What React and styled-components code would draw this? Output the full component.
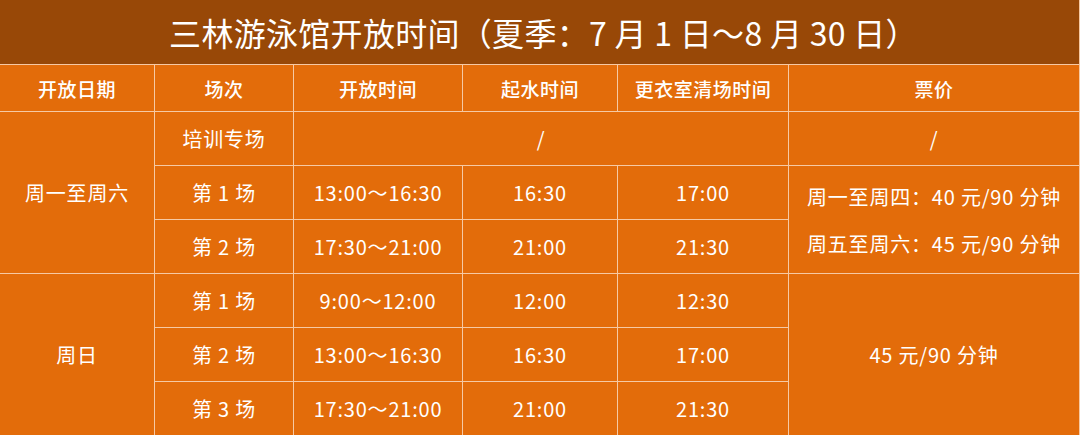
import React from "react";
import styled, { createGlobalStyle } from "styled-components";

const GlobalStyle = createGlobalStyle`
  html, body {
    margin: 0;
    padding: 0;
    background: #e36c0a;
    overflow: hidden;
  }
`;

// 표 전체: 배경색이 곧 선 색 (gap 1px)
const Table = styled.div`
  display: grid;
  grid-template-columns: 154px 138px 168px 154px 170px 290px;
  grid-template-rows: 64px 46px repeat(6, 53px);
  gap: 1px;
  width: 1080px;
  height: 435px;
  padding-right: 1px;
  box-sizing: border-box;
  background: #f6c9a4;
  overflow: hidden;
  font-family: "Noto Sans CJK SC", "Noto Sans", sans-serif;
  color: #fff;
`;

const Title = styled.div`
  grid-column: 1 / -1;
  background: #984807;
  display: flex;
  align-items: center;
  justify-content: center;
  font-size: 32px;
  font-weight: 400;
  padding-left: 8px;
  letter-spacing: 0.3px;
`;

const Cell = styled.div`
  grid-column: ${(p) => p.$col || "auto"};
  grid-row: ${(p) => p.$row || "auto"};
  background: #e36c0a;
  display: flex;
  flex-direction: column;
  align-items: center;
  justify-content: center;
  font-size: ${(p) => (p.$head ? "19px" : "20px")};
  font-weight: ${(p) => (p.$head ? 500 : 400)};
  letter-spacing: ${(p) => (p.$head ? "0.5px" : "0.8px")};
  line-height: 47px;
  white-space: nowrap;
`;

const rows1 = [
  ["第 1 场", "13:00～16:30", "16:30", "17:00"],
  ["第 2 场", "17:30～21:00", "21:00", "21:30"],
];

const rows2 = [
  ["第 1 场", "9:00～12:00", "12:00", "12:30"],
  ["第 2 场", "13:00～16:30", "16:30", "17:00"],
  ["第 3 场", "17:30～21:00", "21:00", "21:30"],
];

const heads = ["开放日期", "场次", "开放时间", "起水时间", "更衣室清场时间", "票价"];

export default function App() {
  return (
    <>
      <GlobalStyle />
      <Table>
        <Title>三林游泳馆开放时间（夏季：7 月 1 日～8 月 30 日）</Title>
        {heads.map((h) => (
          <Cell key={h} $head>{h}</Cell>
        ))}

        {/* 周一至周六 */}
        <Cell $col="1" $row="3 / span 3">周一至周六</Cell>
        <Cell $col="2" $row="3">培训专场</Cell>
        <Cell $col="3 / span 3" $row="3">/</Cell>
        <Cell $col="6" $row="3">/</Cell>
        {rows1.map((r, i) =>
          r.map((v, j) => (
            <Cell key={"a" + i + j} $col={String(j + 2)} $row={String(i + 4)}>{v}</Cell>
          ))
        )}
        <Cell $col="6" $row="4 / span 2">
          <div>周一至周四：40 元/90 分钟</div>
          <div>周五至周六：45 元/90 分钟</div>
        </Cell>

        {/* 周日 */}
        <Cell $col="1" $row="6 / span 3">周日</Cell>
        {rows2.map((r, i) =>
          r.map((v, j) => (
            <Cell key={"b" + i + j} $col={String(j + 2)} $row={String(i + 6)}>{v}</Cell>
          ))
        )}
        <Cell $col="6" $row="6 / span 3">45 元/90 分钟</Cell>
      </Table>
    </>
  );
}
